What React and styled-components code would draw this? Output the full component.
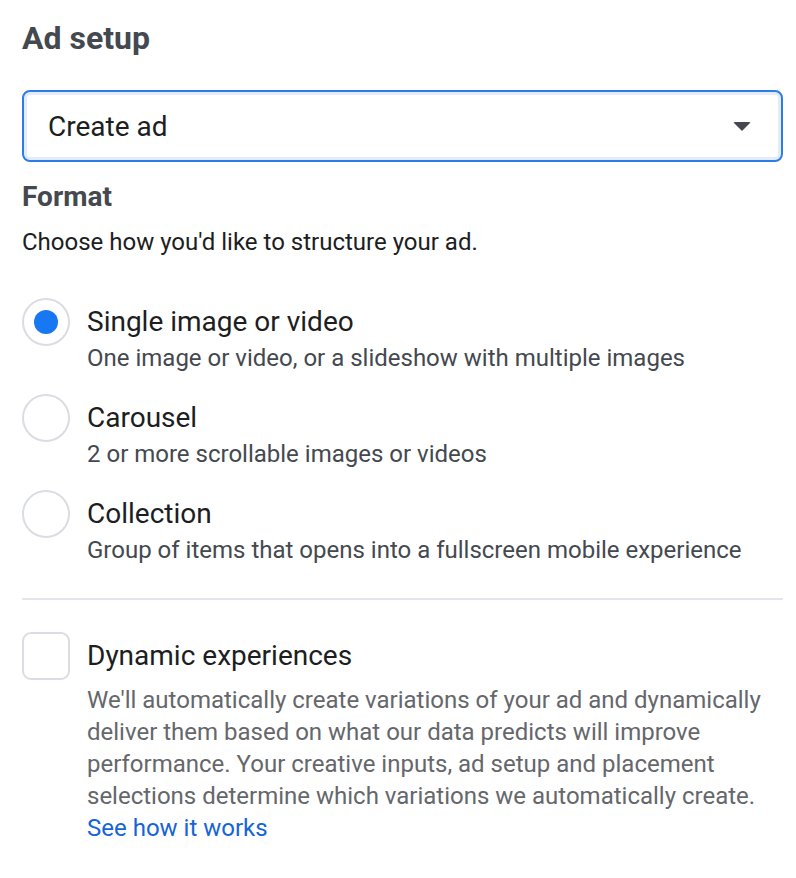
import React from "react";
import styled, { createGlobalStyle } from "styled-components";

const Global = createGlobalStyle`
  body {
    margin: 0;
    background: #fff;
    font-family: Roboto, "Liberation Sans", sans-serif;
  }
`;

const Page = styled.div`
  padding: 18px 13px 0 22px;
  display: flex;
  flex-direction: column;
`;

const Title = styled.h1`
  margin: 0;
  font-size: 32px;
  line-height: 40px;
  font-weight: 700;
  color: #444950;
`;

const Select = styled.div`
  margin-top: 32px;
  height: 72px;
  box-sizing: border-box;
  border: 2px solid #2d7ce8;
  border-radius: 8px;
  box-shadow: inset 0 0 0 3px #e3ecfb;
  display: flex;
  align-items: center;
  justify-content: space-between;
  padding: 0 30px 0 24px;
  font-size: 28px;
  color: #1c1e21;
`;

const Caret = styled.span`
  width: 0;
  height: 0;
  border-left: 9px solid transparent;
  border-right: 9px solid transparent;
  border-top: 9px solid #444950;
  border-radius: 2px;
`;

const Heading = styled.h2`
  margin: 17px 0 0;
  font-size: 28px;
  line-height: 36px;
  font-weight: 700;
  color: #444950;
`;

const Hint = styled.p`
  margin: 11px 0 0;
  font-size: 24px;
  line-height: 32px;
  color: #1c1e21;
`;

const Options = styled.div`
  margin-top: 40px;
  display: flex;
  flex-direction: column;
  gap: 20px;
`;

const Option = styled.label`
  display: flex;
  gap: 17px;
  align-items: flex-start;
`;

const Radio = styled.span`
  flex: none;
  width: 48px;
  height: 48px;
  box-sizing: border-box;
  border-radius: 50%;
  border: 2px solid #dadde1;
  display: flex;
  align-items: center;
  justify-content: center;

  &::after {
    content: "";
    width: 24px;
    height: 24px;
    border-radius: 50%;
    background: ${p => (p.$checked ? "#1877f2" : "transparent")};
  }
`;

const Box = styled.span`
  flex: none;
  width: 48px;
  height: 48px;
  box-sizing: border-box;
  border-radius: 9px;
  border: 2px solid #dadde1;
`;

const Text = styled.div`
  display: flex;
  flex-direction: column;
  padding-top: 6px;
`;

const Label = styled.span`
  font-size: 28px;
  line-height: 36px;
  color: #1c1e21;
`;

const Sub = styled.span`
  margin-top: 2px;
  font-size: 24px;
  line-height: 32px;
  color: #444950;
`;

const Divider = styled.hr`
  margin: 32px 0 0;
  border: none;
  border-top: 2px solid #e4e6eb;
`;

const Dynamic = styled(Option)`
  margin-top: 32px;
`;

const Desc = styled.p`
  margin: 10px 0 0;
  font-size: 24px;
  line-height: 32px;
  color: #65676b;
`;

const Link = styled.a`
  color: #1664d9;
  text-decoration: none;
`;

const formats = [
  { label: "Single image or video", sub: "One image or video, or a slideshow with multiple images", checked: true },
  { label: "Carousel", sub: "2 or more scrollable images or videos" },
  { label: "Collection", sub: "Group of items that opens into a fullscreen mobile experience" },
];

export default function App() {
  return (
    <Page>
      <Global />
      <Title>Ad setup</Title>
      <Select>
        Create ad
        <Caret />
      </Select>
      <Heading>Format</Heading>
      <Hint>Choose how you'd like to structure your ad.</Hint>
      <Options>
        {formats.map(f => (
          <Option key={f.label}>
            <Radio $checked={f.checked} />
            <Text>
              <Label>{f.label}</Label>
              <Sub>{f.sub}</Sub>
            </Text>
          </Option>
        ))}
      </Options>
      <Divider />
      <Dynamic>
        <Box />
        <Text>
          <Label>Dynamic experiences</Label>
          <Desc>
            We'll automatically create variations of your ad and dynamically
            deliver them based on what our data predicts will improve
            performance. Your creative inputs, ad setup and placement
            selections determine which variations we automatically create.
            <br />
            <Link href="#">See how it works</Link>
          </Desc>
        </Text>
      </Dynamic>
    </Page>
  );
}
